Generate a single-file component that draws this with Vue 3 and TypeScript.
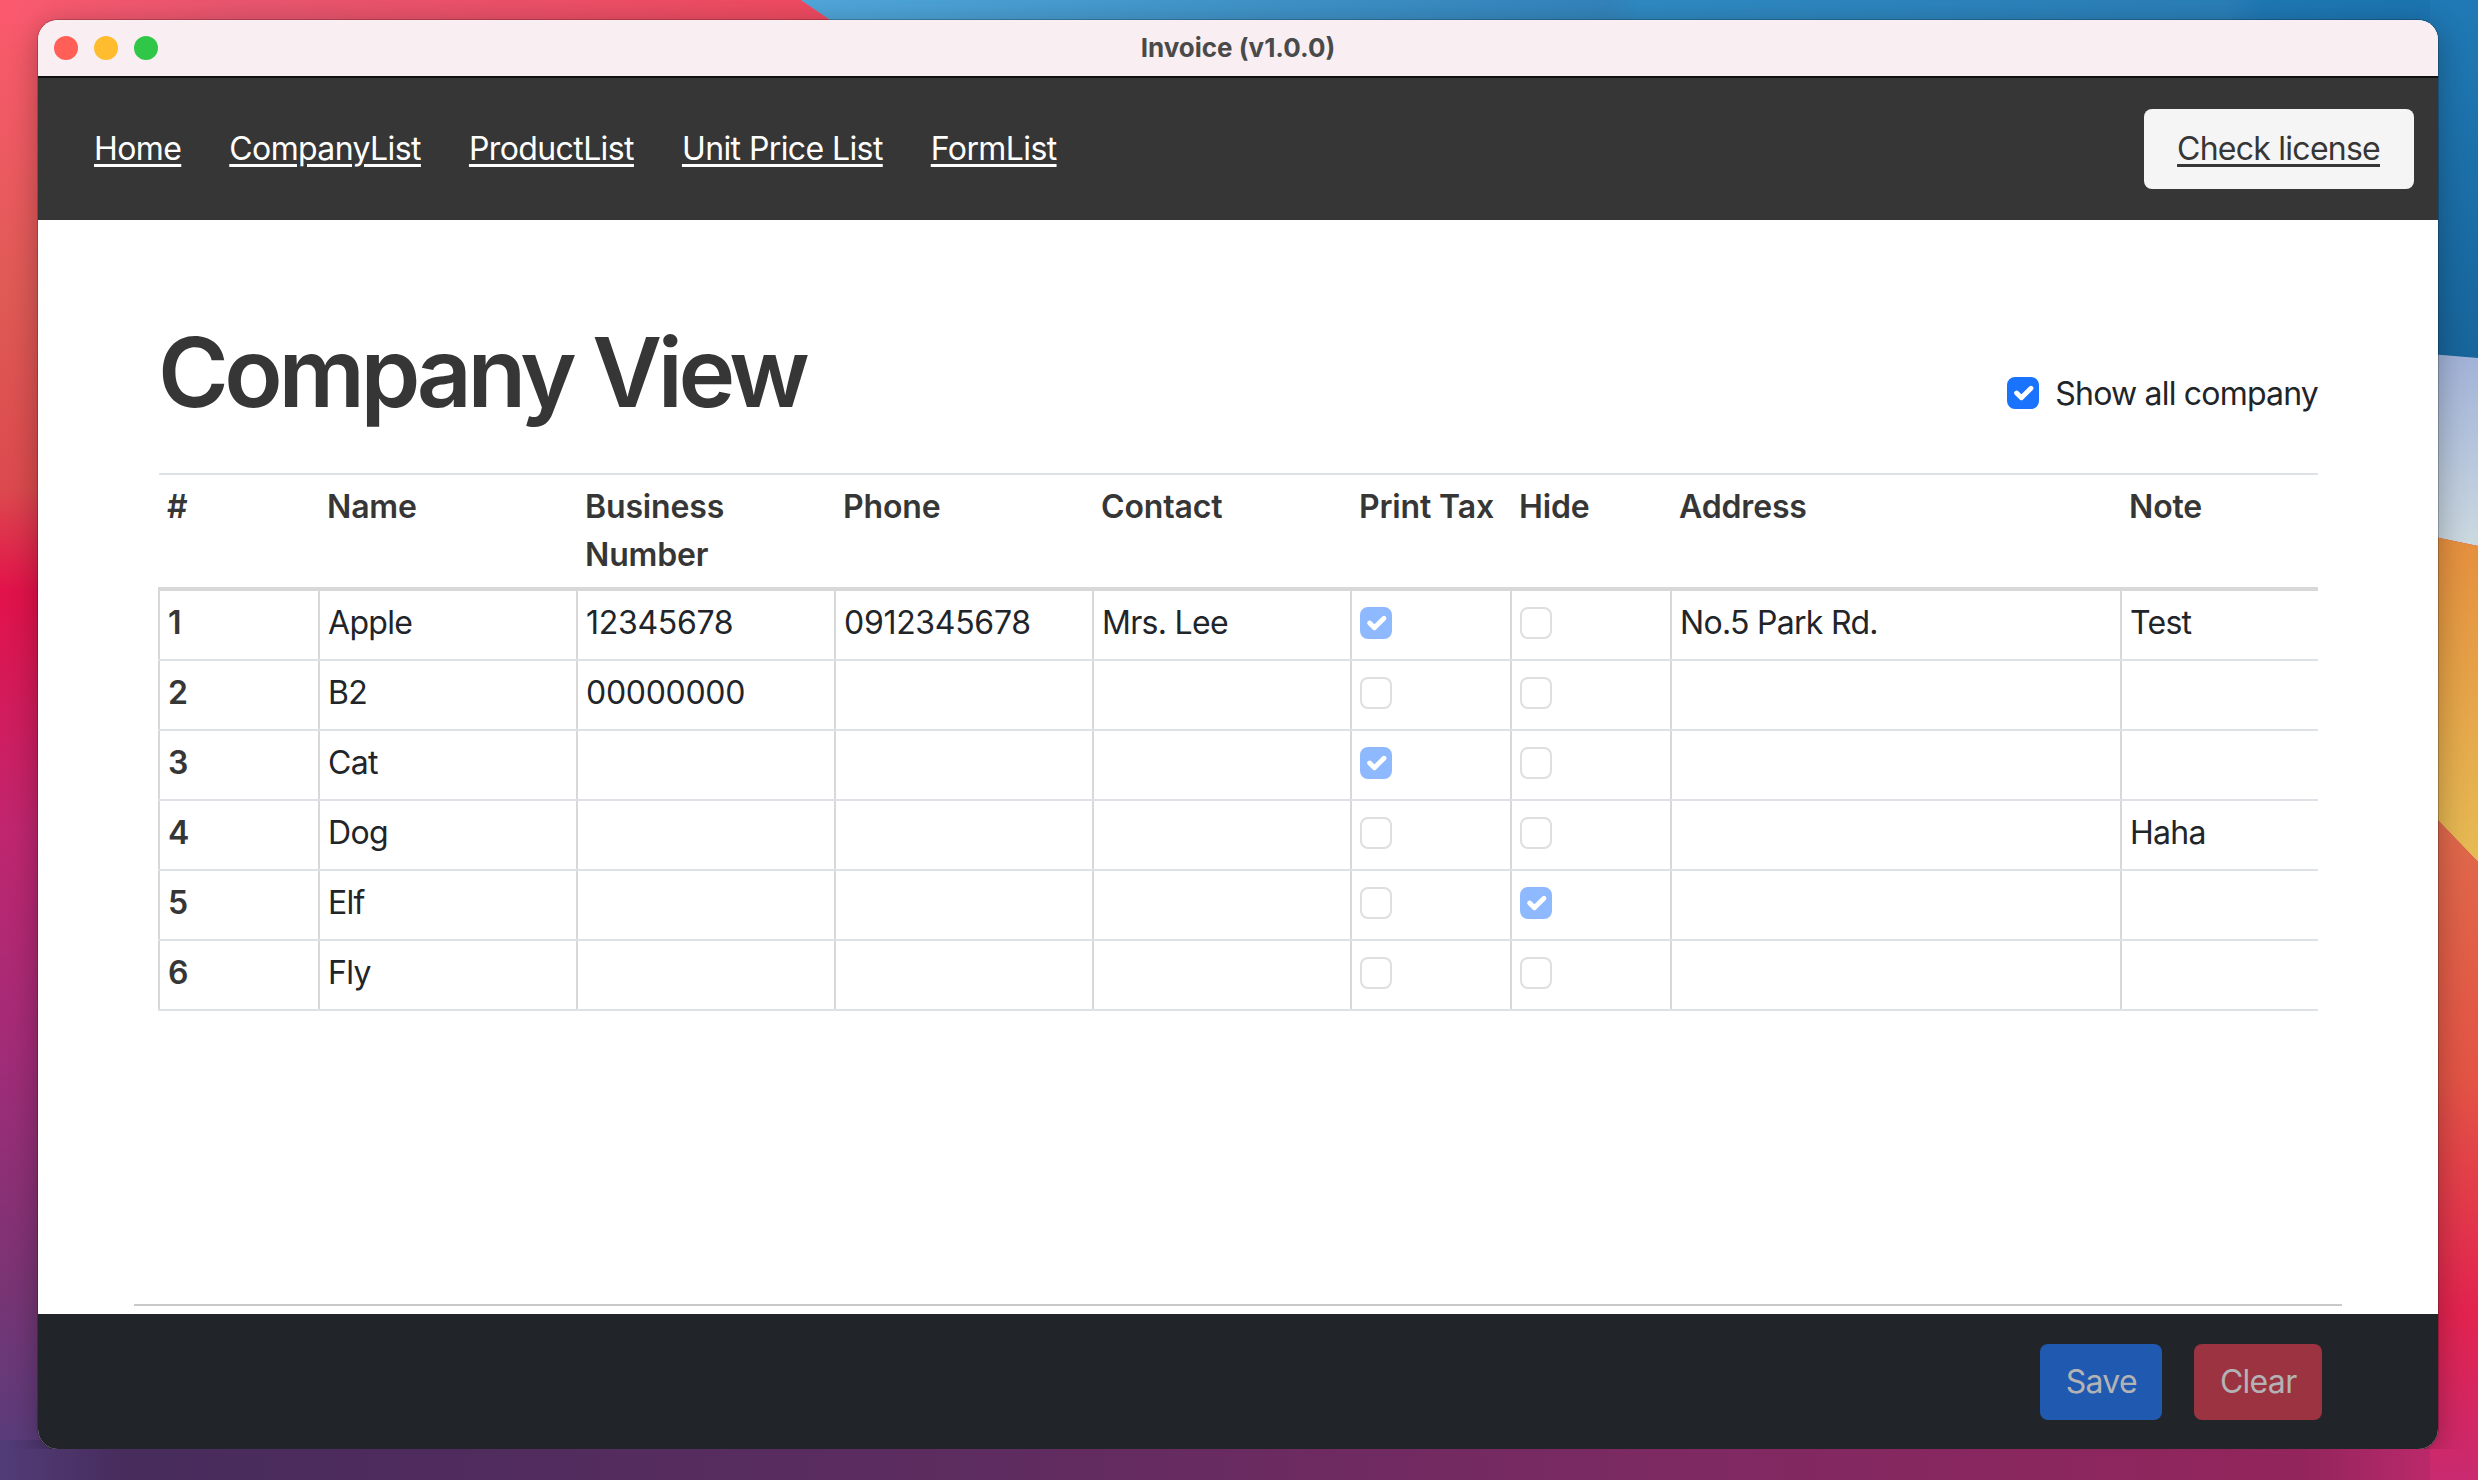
<template>
  <svg class="wallpaper" width="2478" height="1480" viewBox="0 0 2478 1480">
    <defs>
      <linearGradient id="leftStrip" x1="0" y1="0" x2="0" y2="1">
        <stop offset="0" stop-color="#fb5a6e" />
        <stop offset="0.2" stop-color="#df5a55" />
        <stop offset="0.33" stop-color="#dc4a4e" />
        <stop offset="0.4" stop-color="#e2124a" />
        <stop offset="0.56" stop-color="#c0266f" />
        <stop offset="0.72" stop-color="#a02c78" />
        <stop offset="0.86" stop-color="#7c3474" />
        <stop offset="1" stop-color="#533e7c" />
      </linearGradient>
      <linearGradient id="topRed">
        <stop offset="0" stop-color="#fb5a6e" />
        <stop offset="0.3" stop-color="#e9566f" />
        <stop offset="1" stop-color="#ef4a60" />
      </linearGradient>
      <linearGradient id="topBlue">
        <stop offset="0" stop-color="#50a7da" />
        <stop offset="0.48" stop-color="#3384bb" />
        <stop offset="0.5" stop-color="#2f8ac2" />
        <stop offset="0.85" stop-color="#2a7fb8" />
        <stop offset="0.87" stop-color="#1f78b4" />
        <stop offset="1" stop-color="#1b74b0" />
      </linearGradient>
      <linearGradient id="bottomStrip">
        <stop offset="0" stop-color="#523c78" />
        <stop offset="0.05" stop-color="#472c5c" />
        <stop offset="0.4" stop-color="#5e2c60" />
        <stop offset="0.7" stop-color="#802962" />
        <stop offset="0.93" stop-color="#93255c" />
        <stop offset="1" stop-color="#c92a70" />
      </linearGradient>
      <linearGradient id="rightBlue" x1="0" y1="0" x2="0" y2="1">
        <stop offset="0" stop-color="#2079b5" />
        <stop offset="1" stop-color="#17659b" />
      </linearGradient>
      <linearGradient id="rightSky" x1="0" y1="0" x2="0" y2="1">
        <stop offset="0" stop-color="#a1b2d8" />
        <stop offset="1" stop-color="#cbd9e0" />
      </linearGradient>
      <linearGradient id="rightOrange" x1="0" y1="0" x2="0" y2="1">
        <stop offset="0" stop-color="#e58f3e" />
        <stop offset="1" stop-color="#e6bb54" />
      </linearGradient>
      <linearGradient id="rightRed" x1="0" y1="0" x2="0" y2="1">
        <stop offset="0" stop-color="#df6a4b" />
        <stop offset="0.4" stop-color="#e35445" />
        <stop offset="0.75" stop-color="#e2234f" />
        <stop offset="1" stop-color="#c92a70" />
      </linearGradient>
    </defs>
    <rect x="0" y="0" width="2478" height="1480" fill="url(#leftStrip)" />
    <rect x="0" y="1440" width="2478" height="40" fill="url(#bottomStrip)" />
    <polygon points="0,0 801,0 836,24 0,24" fill="url(#topRed)" />
    <polygon points="801,0 2478,0 2478,24 836,24" fill="url(#topBlue)" />
    <polygon points="2430,0 2478,0 2478,360 2430,354" fill="url(#rightBlue)" />
    <polygon points="2430,354 2478,358 2478,546 2430,536" fill="url(#rightSky)" />
    <polygon points="2430,536 2478,546 2478,862 2430,812" fill="url(#rightOrange)" />
    <polygon points="2430,812 2478,862 2478,1480 2430,1480" fill="url(#rightRed)" />
  </svg>

  <div class="window">
    <div class="titlebar">
      <div class="traffic">
        <span class="dot dot--red"></span>
        <span class="dot dot--yellow"></span>
        <span class="dot dot--green"></span>
      </div>
      <div class="titlebar__title">Invoice (v1.0.0)</div>
    </div>

    <nav class="navbar">
      <div class="navbar__links">
        <a v-for="link in links" :key="link" href="#" class="navbar__link">{{ link }}</a>
      </div>
      <a href="#" class="navbar__license">Check license</a>
    </nav>

    <main class="main">
      <div class="content">
        <div class="content__head">
          <h1 class="content__title">Company View</h1>
          <label class="show-all">
            <span class="check check--active">
              <svg viewBox="0 0 20 20"><path d="M6 10l3 3l6-6" /></svg>
            </span>
            <span class="show-all__text">Show all company</span>
          </label>
        </div>

        <table class="company-table">
          <thead>
            <tr>
              <th v-for="col in columns" :key="col">{{ col }}</th>
            </tr>
          </thead>
          <tbody>
            <tr v-for="row in companies" :key="row.id">
              <td class="company-table__id">{{ row.id }}</td>
              <td>{{ row.name }}</td>
              <td>{{ row.business }}</td>
              <td>{{ row.phone }}</td>
              <td>{{ row.contact }}</td>
              <td>
                <span class="check" :class="{ 'check--on': row.tax }">
                  <svg v-if="row.tax" viewBox="0 0 20 20"><path d="M6 10l3 3l6-6" /></svg>
                </span>
              </td>
              <td>
                <span class="check" :class="{ 'check--on': row.hide }">
                  <svg v-if="row.hide" viewBox="0 0 20 20"><path d="M6 10l3 3l6-6" /></svg>
                </span>
              </td>
              <td>{{ row.address }}</td>
              <td>{{ row.note }}</td>
            </tr>
          </tbody>
        </table>
      </div>
      <hr class="main__rule" />
    </main>

    <footer class="footer">
      <button class="btn btn--save" type="button">Save</button>
      <button class="btn btn--clear" type="button">Clear</button>
    </footer>
  </div>
</template>

<script setup lang="ts">
const links = ['Home', 'CompanyList', 'ProductList', 'Unit Price List', 'FormList']

const columns = ['#', 'Name', 'Business Number', 'Phone', 'Contact', 'Print Tax', 'Hide', 'Address', 'Note']

const companies = [
  { id: 1, name: 'Apple', business: '12345678', phone: '0912345678', contact: 'Mrs. Lee', tax: true, hide: false, address: 'No.5 Park Rd.', note: 'Test' },
  { id: 2, name: 'B2', business: '00000000', phone: '', contact: '', tax: false, hide: false, address: '', note: '' },
  { id: 3, name: 'Cat', business: '', phone: '', contact: '', tax: true, hide: false, address: '', note: '' },
  { id: 4, name: 'Dog', business: '', phone: '', contact: '', tax: false, hide: false, address: '', note: 'Haha' },
  { id: 5, name: 'Elf', business: '', phone: '', contact: '', tax: false, hide: true, address: '', note: '' },
  { id: 6, name: 'Fly', business: '', phone: '', contact: '', tax: false, hide: false, address: '', note: '' }
]
</script>

<style>
html,
body {
  margin: 0;
  overflow: hidden;
}
</style>

<style scoped>
.wallpaper {
  position: absolute;
  top: 0;
  left: 0;
  z-index: 0;
}

.window {
  position: relative;
  z-index: 1;
  box-sizing: border-box;
  width: 2400px;
  height: 1429px;
  margin: 20px 0 0 38px;
  display: flex;
  flex-direction: column;
  border-radius: 20px;
  overflow: hidden;
  font-family: Inter, "Liberation Sans", sans-serif;
  font-size: 32px;
  line-height: 48px;
  letter-spacing: -0.7px;
  color: #212529;
  background: #fff;
  box-shadow: 0 0 0 1px rgba(0, 0, 0, 0.2), 0 6px 30px rgba(0, 0, 0, 0.3);
}

.titlebar {
  flex: none;
  height: 56px;
  background: #f9eff3;
  border-bottom: 2px solid #111;
  box-sizing: content-box;
  display: grid;
  grid-template-columns: 1fr auto 1fr;
  align-items: center;
}

.traffic {
  padding-left: 16px;
  display: flex;
  gap: 16px;
}

.dot {
  width: 24px;
  height: 24px;
  border-radius: 50%;
}

.dot--red {
  background: #ff5f57;
}

.dot--yellow {
  background: #febc2e;
}

.dot--green {
  background: #30c748;
}

.titlebar__title {
  font-size: 26px;
  font-weight: 700;
  line-height: 34px;
  letter-spacing: 0;
  color: #4a4a4a;
}

.navbar {
  flex: none;
  height: 142px;
  box-sizing: border-box;
  background: #363636;
  padding: 0 24px 0 32px;
  display: flex;
  align-items: center;
  justify-content: space-between;
}

.navbar__links {
  display: flex;
}

.navbar__link {
  padding: 0 24px;
  letter-spacing: -0.6px;
  color: #fff;
  text-decoration: underline;
  text-underline-offset: 4px;
}

.navbar__license {
  height: 80px;
  box-sizing: border-box;
  padding: 16px 34px 16px 33px;
  letter-spacing: -0.75px;
  background: #f5f5f5;
  color: #363636;
  border-radius: 8px;
  text-decoration: underline;
  text-underline-offset: 4px;
}

.main {
  flex: 1;
  display: flex;
  flex-direction: column;
  background: #fff;
}

.content {
  flex: 1;
  padding: 0 120px;
}

.content__head {
  height: 253px;
  display: flex;
  align-items: flex-start;
  justify-content: space-between;
}

.content__title {
  margin: 100px 0 0;
  font-size: 96px;
  font-weight: 600;
  line-height: 104px;
  letter-spacing: -4.4px;
  color: #363636;
}

.show-all {
  margin-top: 148px;
  display: flex;
  align-items: center;
  gap: 16px;
}

.show-all__text {
  padding-top: 2px;
  letter-spacing: -0.8px;
}

.check {
  display: block;
  width: 32px;
  height: 32px;
  box-sizing: border-box;
  border: 2px solid #dfdfdf;
  border-radius: 8px;
  background: #fff;
}

.check svg {
  display: block;
  width: 32px;
  height: 32px;
  margin: -2px;
}

.check path {
  fill: none;
  stroke: #fff;
  stroke-width: 3;
  stroke-linecap: round;
  stroke-linejoin: round;
}

.check--active {
  background: #1a73fd;
  border-color: #1a73fd;
}

.check--on {
  background: #8fb9fe;
  border-color: #8fb9fe;
}

.company-table {
  width: 2160px;
  border-collapse: collapse;
  table-layout: fixed;
}

.company-table th {
  box-sizing: border-box;
  padding: 8px;
  text-align: left;
  vertical-align: top;
  font-weight: 600;
  letter-spacing: -0.15px;
  color: #363636;
  border-top: 2px solid #dee2e6;
  border-bottom: 4px solid #d8d8d8;
}

.company-table th:nth-child(1),
.company-table th:nth-child(6),
.company-table th:nth-child(7) {
  width: 160px;
}

.company-table th:nth-child(2),
.company-table th:nth-child(3),
.company-table th:nth-child(4),
.company-table th:nth-child(5) {
  width: 258px;
}

.company-table th:nth-child(8) {
  width: 450px;
}

.company-table td {
  height: 68px;
  box-sizing: border-box;
  padding: 8px 8px 12px;
  vertical-align: top;
  border: 2px solid #d8d8d8;
  border-top-color: #dee2e6;
  border-bottom-color: #dee2e6;
}

.company-table td:nth-child(3),
.company-table td:nth-child(4) {
  letter-spacing: -0.3px;
}

.company-table td:last-child {
  border-right: 0;
}

.company-table__id {
  font-weight: 600;
  color: #363636;
}

.company-table td .check {
  margin-top: 8px;
}

.main__rule {
  flex: none;
  height: 2px;
  margin: 0 96px 8px;
  border: 0;
  background: #c9c9c9;
}

.footer {
  flex: none;
  height: 135px;
  box-sizing: border-box;
  background: #212529;
  padding: 30px 116px 0 0;
  display: flex;
  justify-content: flex-end;
  align-items: flex-start;
  gap: 32px;
}

.btn {
  height: 76px;
  padding: 0 25.5px;
  border: 0;
  border-radius: 8px;
  font: inherit;
  letter-spacing: inherit;
  color: #b3b3b5;
}

.btn--save {
  background: #2059b0;
}

.btn--clear {
  background: #9b3340;
}
</style>
